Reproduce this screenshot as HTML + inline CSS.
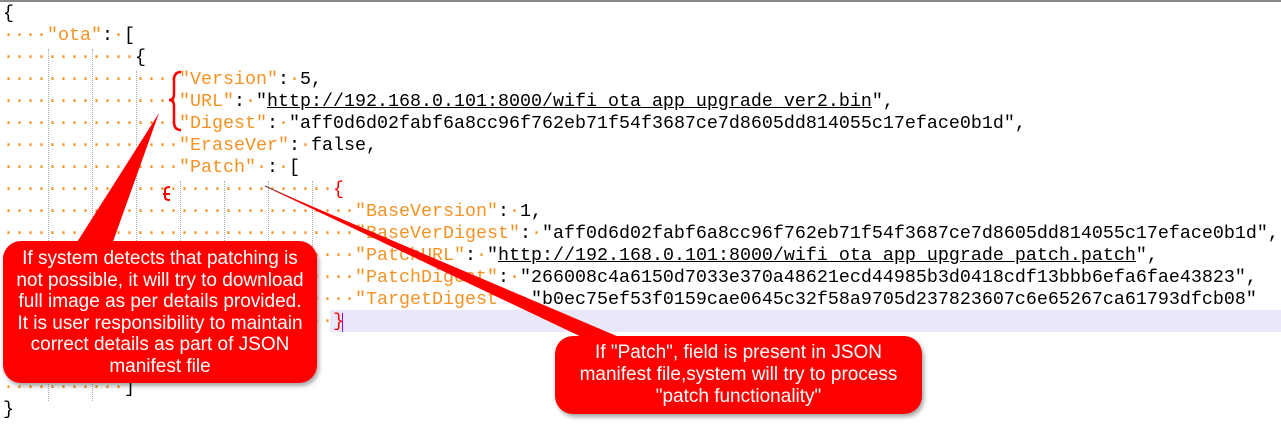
<!DOCTYPE html>
<html><head><meta charset="utf-8"><style>
body{margin:0;width:1281px;height:443px;overflow:hidden;background:#fff;position:relative;font-family:"Liberation Mono",monospace}
.top{position:absolute;left:0;top:0;width:1281px;height:2px;background:#888}
.l{position:absolute;left:3px;font-size:18.33px;line-height:22px;height:22px;white-space:pre;color:#000}
.k{color:#f39325}.d{color:#f39325}
u{text-decoration:underline}
.g{position:absolute;width:0;border-left:1px dotted #aaa}
.hl{position:absolute;left:330px;top:310px;width:951px;height:22px;background:#e8e8fa}
.call{position:absolute;background:#f00;color:#fff;border-radius:18px;font-family:"Liberation Sans",sans-serif;text-align:center;box-shadow:2px 3px 4px rgba(0,0,0,.35);white-space:nowrap}
</style></head><body>
<div class="top"></div>
<div class="hl"></div>
<div class="g" style="left:48px;top:49px;height:352px"></div>
<div class="g" style="left:92px;top:49px;height:352px"></div>
<div class="g" style="left:136px;top:71px;height:286px"></div>
<div class="g" style="left:180px;top:181px;height:154px"></div>
<div class="g" style="left:224px;top:181px;height:154px"></div>
<div class="g" style="left:268px;top:181px;height:154px"></div>
<div class="g" style="left:312px;top:181px;height:154px"></div>
<div class="l" style="top:3px">{</div>
<div class="l" style="top:25px"><span class="d">····</span><span class="k">"ota"</span>:<span class="d">·</span>[</div>
<div class="l" style="top:47px"><span class="d">············</span>{</div>
<div class="l" style="top:69px"><span class="d">················</span><span class="k">"Version"</span>:<span class="d">·</span>5,</div>
<div class="l" style="top:91px"><span class="d">················</span><span class="k">"URL"</span>:<span class="d">·</span>"<u>http://192.168.0.101:8000/wifi_ota_app_upgrade_ver2.bin</u>",</div>
<div class="l" style="top:113px"><span class="d">················</span><span class="k">"Digest"</span>:<span class="d">·</span>"aff0d6d02fabf6a8cc96f762eb71f54f3687ce7d8605dd814055c17eface0b1d",</div>
<div class="l" style="top:135px"><span class="d">················</span><span class="k">"EraseVer"</span>:<span class="d">·</span>false,</div>
<div class="l" style="top:157px"><span class="d">················</span><span class="k">"Patch"</span><span class="d">·</span>:<span class="d">·</span>[</div>
<div class="l" style="top:179px"><span class="d">······························</span><span style="color:#f00">{</span></div>
<div class="l" style="top:201px"><span class="d">································</span><span class="k">"BaseVersion"</span>:<span class="d">·</span>1,</div>
<div class="l" style="top:223px"><span class="d">································</span><span class="k">"BaseVerDigest"</span>:<span class="d">·</span>"aff0d6d02fabf6a8cc96f762eb71f54f3687ce7d8605dd814055c17eface0b1d",</div>
<div class="l" style="top:245px"><span class="d">································</span><span class="k">"PatchURL"</span>:<span class="d">·</span>"<u>http://192.168.0.101:8000/wifi_ota_app_upgrade_patch.patch</u>",</div>
<div class="l" style="top:267px"><span class="d">································</span><span class="k">"PatchDigest"</span>:<span class="d">·</span>"266008c4a6150d7033e370a48621ecd44985b3d0418cdf13bbb6efa6fae43823",</div>
<div class="l" style="top:289px"><span class="d">································</span><span class="k">"TargetDigest"</span>:<span class="d">·</span>"b0ec75ef53f0159cae0645c32f58a9705d237823607c6e65267ca61793dfcb08"</div>
<div class="l" style="top:311px"><span class="d">······························</span><span style="color:#f00">}</span></div>
<div style="position:absolute;left:342px;top:313px;width:1px;height:19px;background:#80f"></div>
<div class="l" style="top:377px"><span class="d">···········</span>]</div>
<div class="l" style="top:399px">}</div>
<svg style="position:absolute;left:0;top:0" width="1281" height="443">
<path d="M181 72 Q174 72 174 80 L174 94 Q174 100 169 100 Q174 100 174 106 L174 122 Q174 130 181 130" fill="none" stroke="#f00" stroke-width="2.5"/>
<path d="M170 187 Q165 187 165 190 L165 197 Q165 200 170 200 M163 194 L170 194" fill="none" stroke="#f00" stroke-width="2"/>
<line x1="265" y1="186" x2="340" y2="220" stroke="#777" stroke-width="1.5"/>
<polygon points="159,113 72,250 110,250" fill="#f00"/>
<polygon points="262,185 588,340 626,340" fill="#f00"/>
</svg>
<div class="call" style="left:3px;top:241px;width:314px;height:142px;font-size:19px;line-height:21.5px;padding-top:7px;box-sizing:border-box">If system detects that patching is<br>not possible, it will try to download<br>full image as per details provided.<br>It is user responsibility to maintain<br>correct details as part of JSON<br>manifest file</div>
<div class="call" style="left:555px;top:336px;width:367px;height:78px;font-size:19px;line-height:22px;padding-top:6px;box-sizing:border-box">If "Patch", field is present in JSON<br>manifest file,system will try to process<br>"patch functionality"</div>
</body></html>
